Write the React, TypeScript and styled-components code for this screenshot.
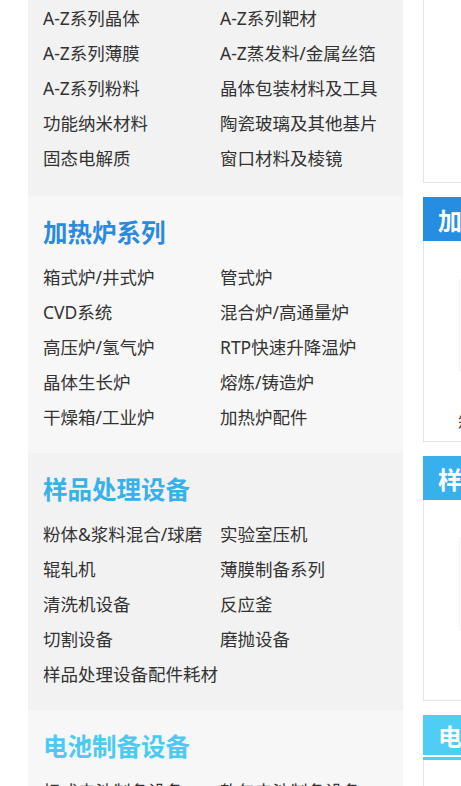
import React from "react";
import styled, { createGlobalStyle } from "styled-components";

type Category = {
  title?: string;
  color?: string;
  shade: string;
  items: string[];
};

type Card = {
  title: string;
  color: string;
  underline?: boolean;
  label?: string;
  picture?: boolean;
};

const categories: Category[] = [
  {
    shade: "#f2f2f2",
    items: [
      "A-Z系列晶体",
      "A-Z系列靶材",
      "A-Z系列薄膜",
      "A-Z蒸发料/金属丝箔",
      "A-Z系列粉料",
      "晶体包装材料及工具",
      "功能纳米材料",
      "陶瓷玻璃及其他基片",
      "固态电解质",
      "窗口材料及棱镜",
    ],
  },
  {
    title: "加热炉系列",
    color: "#2a8ae0",
    shade: "#f7f7f7",
    items: [
      "箱式炉/井式炉",
      "管式炉",
      "CVD系统",
      "混合炉/高通量炉",
      "高压炉/氢气炉",
      "RTP快速升降温炉",
      "晶体生长炉",
      "熔炼/铸造炉",
      "干燥箱/工业炉",
      "加热炉配件",
    ],
  },
  {
    title: "样品处理设备",
    color: "#38b0ec",
    shade: "#f2f2f2",
    items: [
      "粉体&浆料混合/球磨",
      "实验室压机",
      "辊轧机",
      "薄膜制备系列",
      "清洗机设备",
      "反应釜",
      "切割设备",
      "磨抛设备",
      "样品处理设备配件耗材",
    ],
  },
  {
    title: "电池制备设备",
    color: "#4ccaf2",
    shade: "#f7f7f7",
    items: ["扣式电池制备设备", "软包电池制备设备", "圆柱电池", "电极制备"],
  },
];

const cards: Card[] = [
  { title: "加热炉系列", color: "#268ee0", label: "箱式炉", picture: true },
  { title: "样品处理设备", color: "#37b0ec", picture: true },
  { title: "电池制备设备", color: "#4ecdf5", underline: true },
];

const GlobalStyle = createGlobalStyle`
  html, body {
    margin: 0;
    padding: 0;
    background: #fff;
    overflow: hidden;
  }
  body {
    font-family: "Noto Sans", "Noto Sans CJK SC", sans-serif;
    color: #333;
  }
`;

const Page = styled.div`
  display: flex;
  align-items: flex-start;
  gap: 20px;
  padding-left: 28px;
  height: 786px;
  overflow: hidden;
`;

const Menu = styled.div`
  flex: 0 0 375px;
  display: flex;
  flex-direction: column;
`;

const Section = styled.section<{ $shade: string; $first?: boolean }>`
  background: ${(p) => p.$shade};
  padding: ${(p) => (p.$first ? "1px 15px 20px" : "20px 15px 18px")};
`;

const Title = styled.h2<{ $color: string }>`
  margin: 0 0 10px;
  font-size: 24.5px;
  line-height: 34px;
  font-weight: 700;
  color: ${(p) => p.$color};
`;

const Links = styled.ul`
  list-style: none;
  margin: 0;
  padding: 0;
  display: grid;
  grid-template-columns: 177px 1fr;
`;

const Link = styled.li`
  font-size: 17.5px;
  line-height: 35px;
  white-space: nowrap;
  color: #333;
`;

const Side = styled.div`
  flex: 0 0 300px;
  display: flex;
  flex-direction: column;
  gap: 14px;
`;

const TopBox = styled.div`
  height: 182px;
  border: 1px solid #e6e6e6;
  border-top: none;
`;

const CardHead = styled.div<{ $color: string; $underline?: boolean }>`
  height: ${(p) => (p.$underline ? "45px" : "44px")};
  box-sizing: border-box;
  padding: ${(p) => (p.$underline ? "0 15px 5px" : "0 15px")};
  display: flex;
  align-items: center;
  background: ${(p) =>
    p.$underline
      ? `linear-gradient(to bottom, ${p.$color} 0 40px, #fff 40px 42px, ${p.$color} 42px 45px)`
      : p.$color};
  color: #fff;
  font-size: 24px;
  font-weight: 700;
  white-space: nowrap;
`;

const CardBody = styled.div`
  height: 201px;
  border: 1px solid #e6e6e6;
  border-top: none;
  padding: 38px 0 0 34px;
  box-sizing: border-box;
  display: flex;
  flex-direction: column;
`;

const Picture = styled.div`
  width: 120px;
  height: 90px;
  margin-left: 1px;
  border: 1px solid #f3f3f3;
  background: #fcfcfc;
`;

const Label = styled.div`
  margin-top: 40px;
  font-size: 17px;
  line-height: 24px;
  color: #333;
  white-space: nowrap;
`;

export default function App() {
  return (
    <>
      <GlobalStyle />
      <Page>
        <Menu>
          {categories.map((c, i) => (
            <Section key={i} $shade={c.shade} $first={!c.title}>
              {c.title && <Title $color={c.color!}>{c.title}</Title>}
              <Links>
                {c.items.map((item) => (
                  <Link key={item}>{item}</Link>
                ))}
              </Links>
            </Section>
          ))}
        </Menu>
        <Side>
          <TopBox />
          {cards.map((card) => (
            <div key={card.title}>
              <CardHead $color={card.color} $underline={card.underline}>
                {card.title}
              </CardHead>
              <CardBody>
                {card.picture && <Picture />}
                {card.label && <Label>{card.label}</Label>}
              </CardBody>
            </div>
          ))}
        </Side>
      </Page>
    </>
  );
}
